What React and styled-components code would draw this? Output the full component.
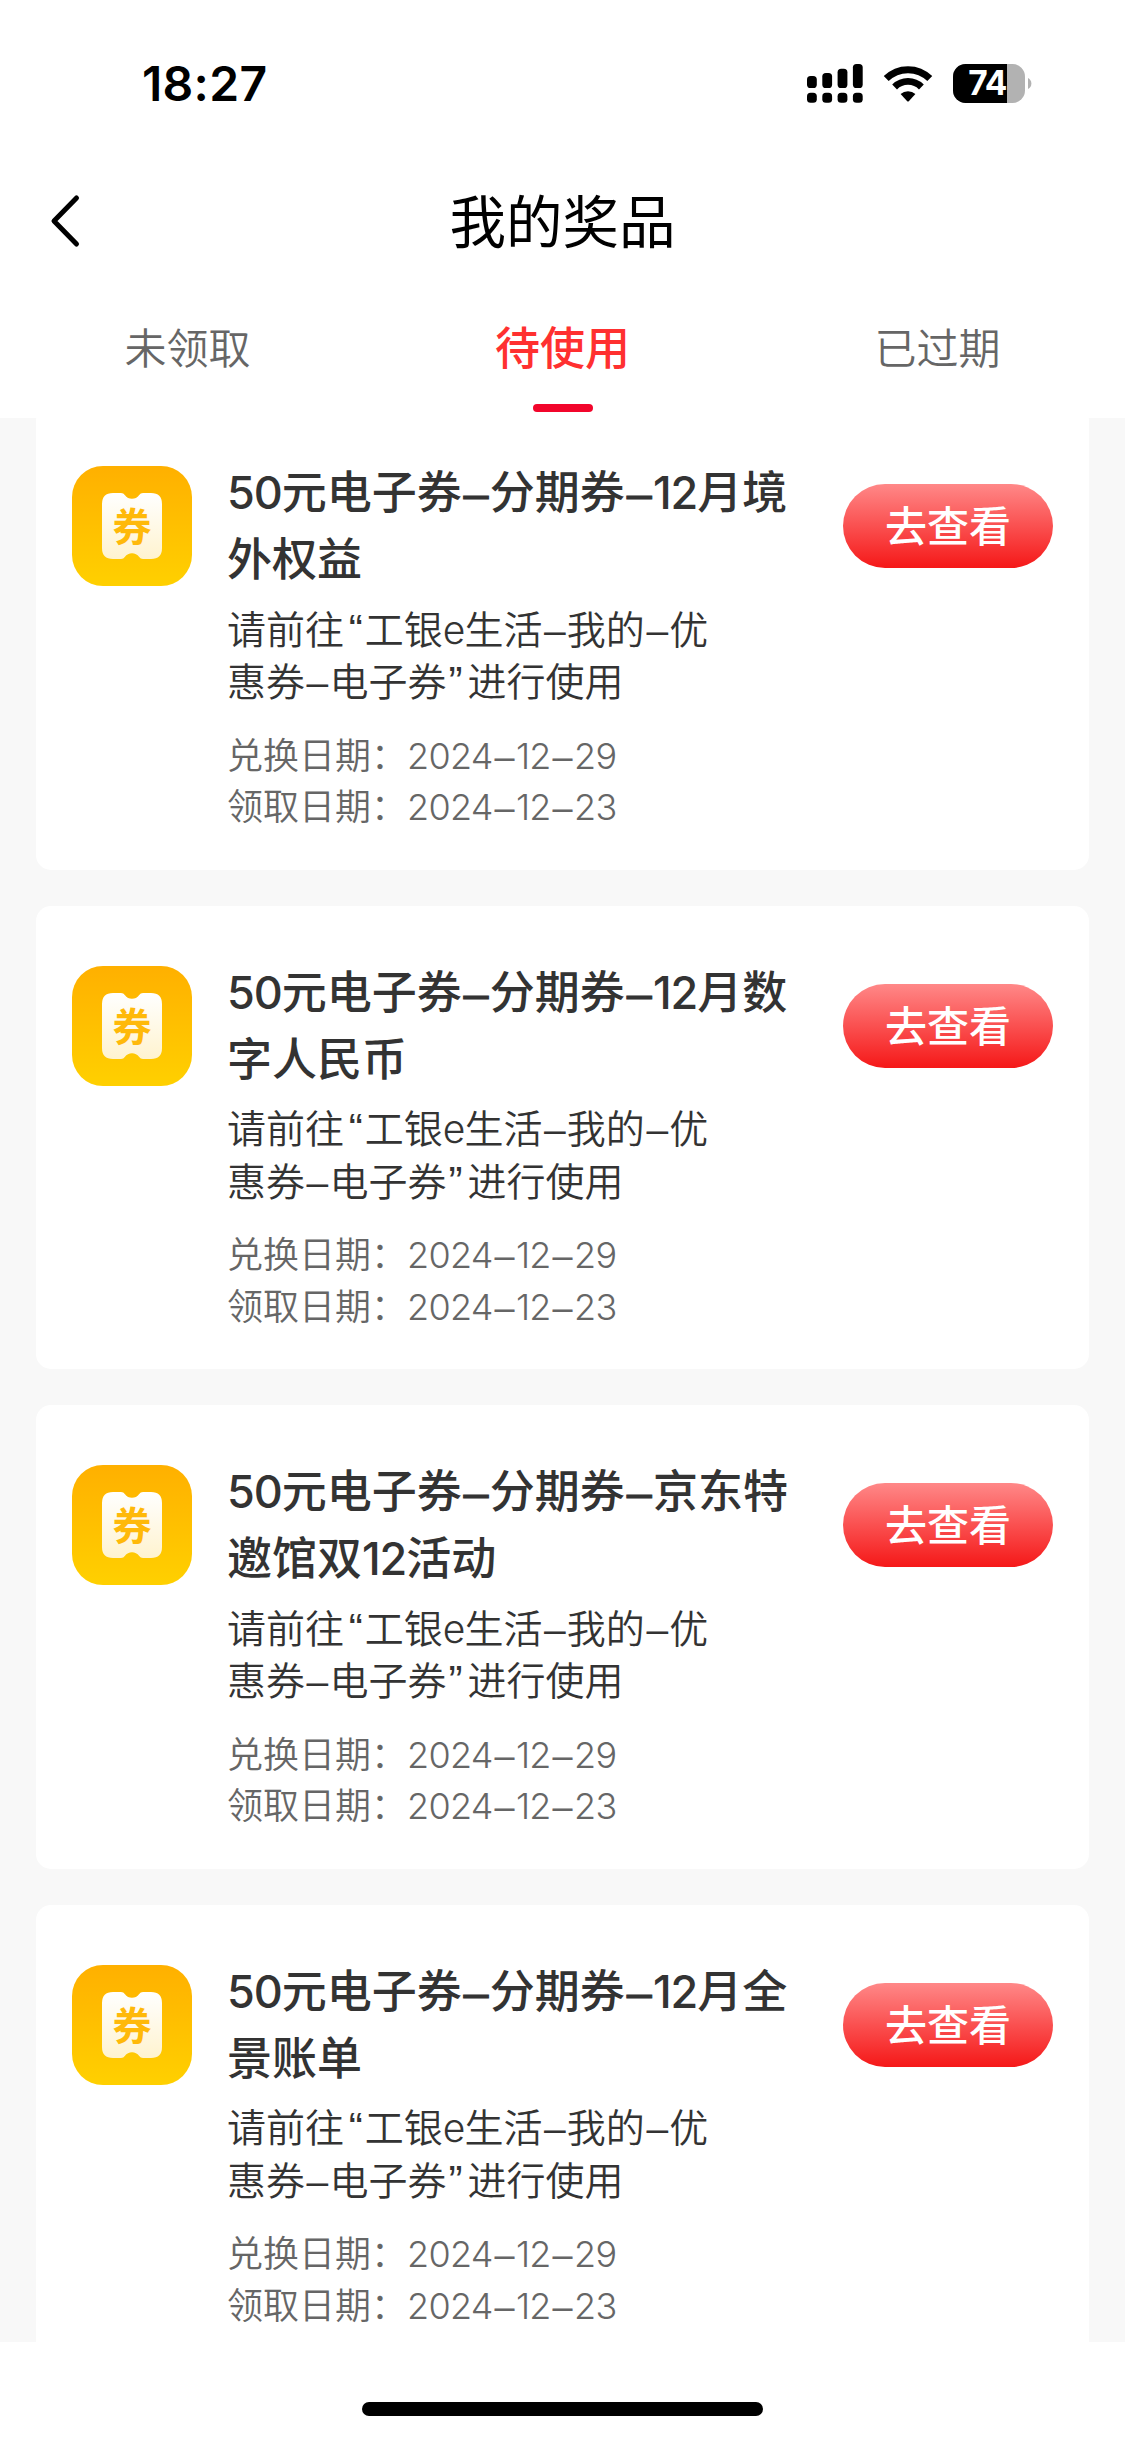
import styled, { createGlobalStyle } from "styled-components"
import { useState } from "react"

const GlobalStyle = createGlobalStyle`
    * {
        box-sizing: border-box;
    }
    body {
        margin: 0;
        background-color: #FFFFFF;
        font-family: Inter, "Noto Sans CJK SC", sans-serif;
        color: #333333;
    }
`

const Page = styled.div`
    display: flex;
    flex-direction: column;
    width: 1125px;
    height: 2439px;
    overflow: hidden;
    background-color: #FFFFFF;
`

const StatusBar = styled.div`
    display: flex;
    justify-content: space-between;
    align-items: center;
    flex: none;
    height: 150px;
    padding: 18px 93px 0 142px;
    color: #000000;
    .time{
        font-size: 48px;
        font-weight: 600;
        line-height: 60px;
        letter-spacing: 0.3px;
    }
    .icons{
        display: flex;
        align-items: center;
    }
    .wifi{
        margin: 0 20px 0 20px;
    }
`

const NavBar = styled.header`
    display: grid;
    grid-template-columns: 150px 1fr 150px;
    align-items: center;
    flex: none;
    height: 143px;
    h1{
        margin: 0;
        padding-top: 3px;
        text-align: center;
        font-size: 56.5px;
        font-weight: 400;
        line-height: 80px;
        color: #000000;
    }
`

const BackButton = styled.button`
    display: flex;
    padding: 0 0 2px 46px;
    border: none;
    background-color: transparent;
    cursor: pointer;
`

const Tabs = styled.nav`
    display: flex;
    flex: none;
    height: 125px;
`

const Tab = styled.button`
    position: relative;
    flex: 1;
    padding: 0 0 20px;
    border: none;
    background-color: transparent;
    font-family: inherit;
    font-size: ${({ $active }) => $active ? '45px' : '42px'};
    font-weight: ${({ $active }) => $active ? 500 : 350};
    color: ${({ $active }) => $active ? '#FF3030' : '#666666'};
    cursor: pointer;
    &::after{
        content: "";
        display: ${({ $active }) => $active ? 'block' : 'none'};
        position: absolute;
        left: 50%;
        bottom: 6px;
        width: 60px;
        height: 8px;
        margin-left: -30px;
        border-radius: 4px;
        background-color: #F2052B;
    }
`

const List = styled.main`
    flex: none;
    height: 1924px;
    overflow: hidden;
    padding: 0 36px;
    background-color: #F8F8F8;
`

const Cards = styled.div`
    display: flex;
    flex-direction: column;
    gap: 36px;
    margin-top: -12px;
`

const CardBox = styled.article`
    display: flex;
    align-items: flex-start;
    flex: none;
    height: 463.5px;
    padding: 60px 36px 0;
    border-radius: 15px;
    background-color: #FFFFFF;
    .icon{
        flex: none;
    }
`

const CardBody = styled.div`
    flex: 1;
    margin: -6px 0 0 35px;
    white-space: nowrap;
    h2{
        margin: 0;
        font-size: 45px;
        font-weight: 500;
        line-height: 66px;
    }
    .description{
        margin: 10.5px 0 0;
        font-size: 39px;
        font-weight: 350;
        line-height: 51.5px;
    }
    .dates{
        margin: 22px 0 0;
        font-size: 36px;
        font-weight: 350;
        line-height: 51.5px;
        color: #666666;
    }
`

const Latin = styled.span`
    letter-spacing: -0.025em;
    .dates &{
        letter-spacing: -0.02em;
    }
`

const Dash = styled.span`
    padding: 0 0.03em 0 0.04em;
    font-family: "Liberation Sans", sans-serif;
    h2 &{
        -webkit-text-stroke: 1px currentColor;
    }
    .dates &{
        padding: 0 0.04em 0 0.05em;
    }
`

const Quote = styled.span`
    padding: ${({ $open }) => $open ? '0 0.05em 0 0.11em' : '0 0.12em 0 0.05em'};
    font-family: "Liberation Sans", sans-serif;
    font-size: 1.08em;
    line-height: 1;
`

const ViewButton = styled.button`
    flex: none;
    width: 210px;
    height: 84px;
    margin-top: 18px;
    padding: 0 0 5px;
    border: none;
    border-radius: 42px;
    background: linear-gradient(180deg, #FF8888 0%, #F51818 100%);
    font-family: inherit;
    font-size: 42px;
    font-weight: 500;
    color: #FFFFFF;
    cursor: pointer;
`

const HomeArea = styled.footer`
    display: flex;
    flex: 1;
    justify-content: center;
    align-items: flex-end;
    padding-bottom: 23px;
    .bar{
        width: 401px;
        height: 14px;
        border-radius: 7px;
        background-color: #000000;
    }
`

const SignalIcon = () => (
    <svg width="56" height="40" viewBox="0 0 56 40">
        {[12, 9, 4.7, 0].map((top, i) => (
            <g key={i}>
                <rect x={i * 15.3} y={top} width="9.8" height={24 - top} rx="3.6"/>
                <rect x={i * 15.3} y="28.8" width="9.8" height="10" rx="3.6"/>
            </g>
        ))}
    </svg>
)

const WifiIcon = () => (
    <svg className="wifi" width="50" height="36" viewBox="0 0 50 36">
        <path d="M3.2 12.6 A31 31 0 0 1 46.8 12.6" fill="none" stroke="#000" strokeWidth="7"/>
        <path d="M11.6 21 A19 19 0 0 1 38.4 21" fill="none" stroke="#000" strokeWidth="6.8"/>
        <path d="M17.6 28 A11 11 0 0 1 32.4 28 L26 35 Q25 36 24 35 Z"/>
    </svg>
)

const BatteryIcon = () => (
    <svg width="79" height="40" viewBox="0 0 79 40">
        <defs>
            <clipPath id="batteryBody"><rect width="72" height="39" rx="12.5"/></clipPath>
        </defs>
        <g clipPath="url(#batteryBody)">
            <rect width="72" height="39" fill="#B2B2B2"/>
            <rect width="54" height="39" fill="#000"/>
        </g>
        <path d="M75 14 Q78.4 16 78.4 19.5 T75 25 Z" fill="#B2B2B2"/>
        <text x="34.3" y="31.4" textAnchor="middle" fontSize="33.5" fontWeight="650" letterSpacing="-1" fill="#fff">74</text>
    </svg>
)

const CouponIcon = () => (
    <svg className="icon" width="120" height="120" viewBox="0 0 120 120">
        <defs>
            <linearGradient id="couponBg" x1="0" y1="0" x2="0" y2="1">
                <stop offset="0" stopColor="#FFB000"/>
                <stop offset="1" stopColor="#FFD000"/>
            </linearGradient>
            <linearGradient id="couponPaper" x1="0" y1="0" x2="0" y2="1">
                <stop offset="0" stopColor="#FFFFFF"/>
                <stop offset="1" stopColor="#FFF3CF"/>
            </linearGradient>
        </defs>
        <rect width="120" height="120" rx="31" fill="url(#couponBg)"/>
        <path d="M41 27 H49 Q51.5 27 53 29.2 C56 34 64 34 67 29.2 Q68.5 27 71 27 H79 Q90 27 90 38 V82 Q90 93 79 93 H71 Q68.5 93 67 90.8 C64 86 56 86 53 90.8 Q51.5 93 49 93 H41 Q30 93 30 82 V38 Q30 27 41 27 Z" fill="url(#couponPaper)"/>
        <text x="60" y="75" textAnchor="middle" fontSize="39" fontWeight="700" fill="#FFB90A">券</text>
    </svg>
)

// digits and letters are set tighter than the characters around them, dashes and quotes looser
const Mixed = ({ children }) => children.split(/([0-9a-z]+|[–“”])/).map((part, i) => {
    if (part === '–') return <Dash key={i}>{part}</Dash>
    if (part === '“' || part === '”') return <Quote key={i} $open={part === '“'}>{part}</Quote>
    return i % 2 ? <Latin key={i}>{part}</Latin> : part
})

const prizes = [
    ['50元电子券–分期券–12月境', '外权益'],
    ['50元电子券–分期券–12月数', '字人民币'],
    ['50元电子券–分期券–京东特', '邀馆双12活动'],
    ['50元电子券–分期券–12月全', '景账单'],
]

const Card = ({ title }) => (
    <CardBox>
        <CouponIcon/>
        <CardBody>
            <h2>{title.map(line => <div key={line}><Mixed>{line}</Mixed></div>)}</h2>
            <div className="description">
                <div><Mixed>请前往“工银e生活–我的–优</Mixed></div>
                <div><Mixed>惠券–电子券”进行使用</Mixed></div>
            </div>
            <div className="dates">
                <div><Mixed>兑换日期：2024–12–29</Mixed></div>
                <div><Mixed>领取日期：2024–12–23</Mixed></div>
            </div>
        </CardBody>
        <ViewButton>去查看</ViewButton>
    </CardBox>
)

const App = () => {
    const [active, setActive] = useState('待使用');

    return(
        <Page lang="zh-CN">
            <GlobalStyle/>
            <StatusBar>
                <div className="time">18:27</div>
                <div className="icons">
                    <SignalIcon/>
                    <WifiIcon/>
                    <BatteryIcon/>
                </div>
            </StatusBar>
            <NavBar>
                <BackButton aria-label="返回">
                    <svg width="36" height="56" viewBox="0 0 36 56">
                        <path d="M30.5 5 L8 28 L30.5 51" fill="none" stroke="#000" strokeWidth="5" strokeLinecap="round" strokeLinejoin="round"/>
                    </svg>
                </BackButton>
                <h1>我的奖品</h1>
            </NavBar>
            <Tabs>
                {['未领取', '待使用', '已过期'].map(tab => (
                    <Tab key={tab} $active={tab === active} onClick={() => {setActive(tab)}}>{tab}</Tab>
                ))}
            </Tabs>
            <List>
                <Cards>
                    {prizes.map(title => <Card key={title[1]} title={title}/>)}
                </Cards>
            </List>
            <HomeArea><div className="bar"/></HomeArea>
        </Page>
    )
}

export default App
